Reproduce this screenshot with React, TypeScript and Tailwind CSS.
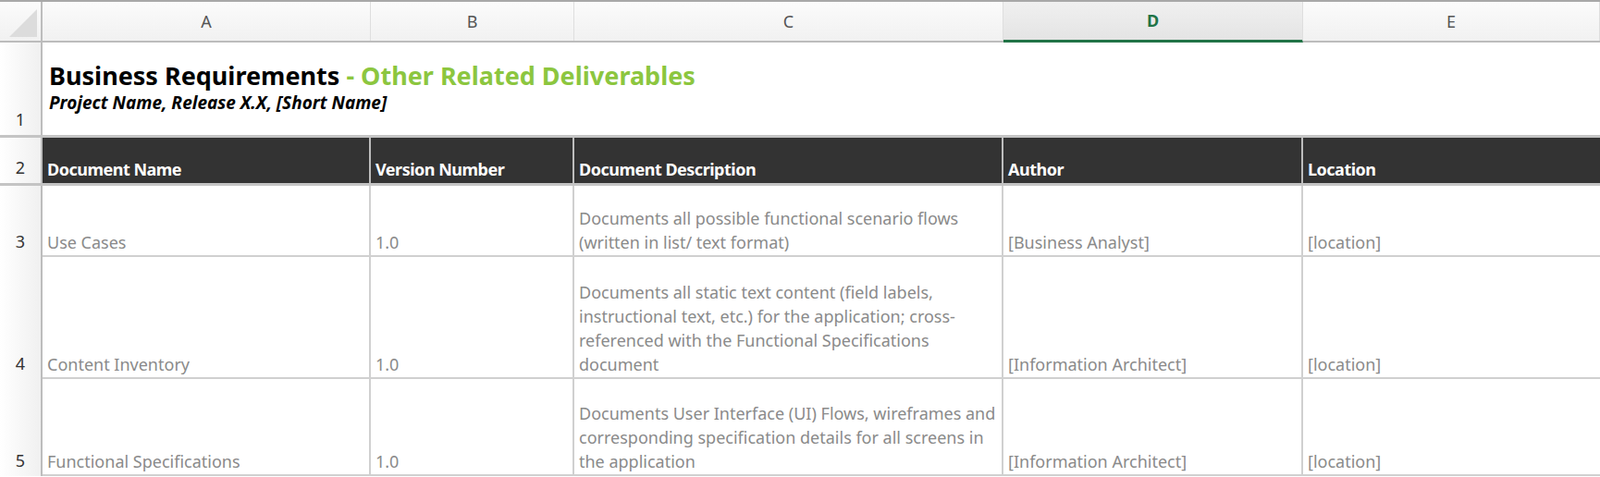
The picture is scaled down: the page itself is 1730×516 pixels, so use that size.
const cols = [
  { key: 'A', w: 'w-[355px]' },
  { key: 'B', w: 'w-[220px]' },
  { key: 'C', w: 'w-[464px]' },
  { key: 'D', w: 'w-[324px]' },
  { key: 'E', w: 'flex-1' },
];

const rows = [
  {
    n: 3,
    h: 'h-[77px]',
    cells: ['Use Cases', '1.0', 'Documents all possible functional scenario flows (written in list/ text format)', '[Business Analyst]', '[location]'],
  },
  {
    n: 4,
    h: 'h-[132px]',
    cells: [
      'Content Inventory',
      '1.0',
      'Documents all static text content (field labels, instructional text, etc.) for the application; cross-referenced with the Functional Specifications document',
      '[Information Architect]',
      '[location]',
    ],
  },
  {
    n: 5,
    h: 'h-[105px]',
    cells: [
      'Functional Specifications',
      '1.0',
      'Documents User Interface (UI) Flows, wireframes and corresponding specification details for all screens in the application',
      '[Information Architect]',
      '[location]',
    ],
  },
];

const headers = ['Document Name', 'Version Number', 'Document Description', 'Author', 'Location'];

function RowNum({ n, h }: { n: number; h: string }) {
  return (
    <div className={`${h} w-[46px] shrink-0 flex items-end justify-center pb-[3px] text-[18px] text-[#333] bg-gradient-to-r from-white to-[#f0f0f0] border-r-2 border-[#bdbdbd]`}>
      {n}
    </div>
  );
}

export default function App() {
  return (
    <div className="w-[1730px] h-[516px] overflow-hidden bg-white font-[family-name:'Liberation_Sans',Arial,sans-serif]">
      {/* column letters */}
      <div className="flex h-[46px] border-t-2 border-[#a8a8a8] border-b-2 border-b-[#bcbcbc] bg-gradient-to-b from-[#fbfbfb] to-[#f1f1f1]">
        <div className="w-[46px] shrink-0 border-r-2 border-[#bdbdbd] relative">
          <svg className="absolute right-[4px] bottom-[4px]" width="30" height="30" viewBox="0 0 30 30">
            <polygon points="30,0 30,30 0,30" fill="#dcdcdc" />
          </svg>
        </div>
        {cols.map((c) => (
          <div
            key={c.key}
            className={`${c.w} shrink-0 flex items-center justify-center text-[18px] border-r border-[#dedede] ${
              c.key === 'D'
                ? 'text-[#217346] font-bold bg-gradient-to-b from-[#f0f0f0] to-[#e4e4e4] border-b-[3px] border-b-[#217346] -mb-[2px]'
                : 'text-[#555]'
            }`}
          >
            {c.key}
          </div>
        ))}
      </div>

      {/* row 1: title */}
      <div className="flex h-[103px] border-b-[3px] border-[#c4c4c4]">
        <RowNum n={1} h="h-[100px]" />
        <div className="flex-1 pl-[7px] pt-[20px]">
          <div className="text-[27px] font-bold leading-[32px] text-black">
            Business Requirements <span className="text-[#8cc63f]">- Other Related Deliverables</span>
          </div>
          <div className="text-[19px] font-bold italic leading-[26px] text-black">
            Project Name, Release X.X, [Short Name]
          </div>
        </div>
      </div>

      {/* row 2: header */}
      <div className="flex h-[52px] border-b-[3px] border-[#c4c4c4]">
        <RowNum n={2} h="h-[49px]" />
        {cols.map((c, i) => (
          <div
            key={c.key}
            className={`${c.w} shrink-0 bg-[#333333] border-r-2 border-[#bdbdbd] last:border-r-0 flex items-end pl-[5px] pb-[1px] text-[18px] font-bold tracking-[-0.5px] text-white`}
          >
            {headers[i]}
          </div>
        ))}
      </div>

      {rows.map((r) => (
        <div key={r.n} className={`flex ${r.h} border-b-2 border-[#d0d0d0]`}>
          <RowNum n={r.n} h={r.h} />
          {cols.map((c, i) => (
            <div
              key={c.key}
              className={`${c.w} shrink-0 border-r-2 border-[#d0d0d0] last:border-r-0 flex items-end pl-[5px] pr-[6px] pb-[1px] text-[18px] leading-[26px] text-[#8a8a8a]`}
            >
              <span>{r.cells[i]}</span>
            </div>
          ))}
        </div>
      ))}
    </div>
  );
}
